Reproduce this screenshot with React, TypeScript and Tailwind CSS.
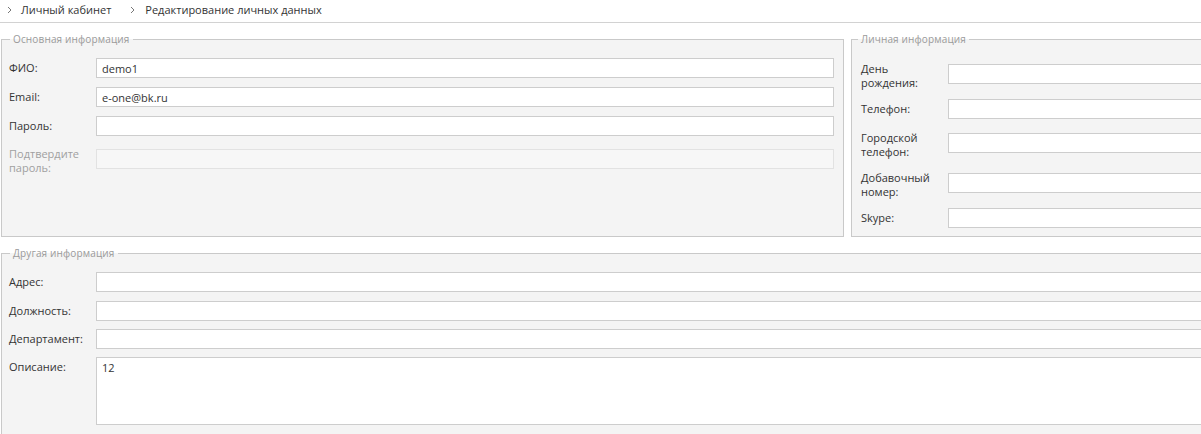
import type { ReactNode } from "react";

const FONT = { fontFamily: '"Open Sans", "Liberation Sans", sans-serif' };

function Chevron() {
  return (
    <svg width="5" height="8" viewBox="0 0 5 8" className="shrink-0">
      <polyline points="1,1 4,4 1,7" fill="none" stroke="#777" strokeWidth="1" />
    </svg>
  );
}

function Legend({ children, className = "" }: { children: ReactNode; className?: string }) {
  return (
    <legend
      className={`px-[3px] text-[10px] leading-[13px] tracking-[0.15px] text-[#9a9a9a] ${className}`}
    >
      {children}
    </legend>
  );
}

function Field({
  label,
  value = "",
  twoLine = false,
  disabled = false,
  className = "",
}: {
  label: ReactNode;
  value?: string;
  twoLine?: boolean;
  disabled?: boolean;
  className?: string;
}) {
  return (
    <div className={`flex ${twoLine ? "items-start" : "items-center"} ${className}`}>
      <label
        className={`w-[87px] shrink-0 text-[11px] leading-[14px] ${
          disabled ? "text-[#a0a0a0]" : "text-[#333]"
        }`}
      >
        {label}
      </label>
      <input
        readOnly
        disabled={disabled}
        value={value}
        className={`h-[20px] min-w-0 flex-1 border px-[5px] text-[11px] text-[#333] outline-none ${
          twoLine ? "mt-[2px]" : ""
        } ${disabled ? "border-[#e2e2e2] bg-[#f7f7f7]" : "border-[#cdcdcd] bg-white"}`}
      />
    </div>
  );
}

export default function App() {
  return (
    <div className="h-[434px] w-[1201px] overflow-hidden bg-white" style={FONT}>
      <div className="w-[1240px]">
        {/* breadcrumbs */}
        <div className="flex h-[23px] items-center border-b border-[#d2d2d2] pb-[2px] text-[11px] text-[#333]">
          <div className="ml-[7px] flex items-center gap-[9px]">
            <Chevron />
            <span>Личный кабинет</span>
          </div>
          <div className="ml-[19px] flex items-center gap-[10px]">
            <Chevron />
            <span>Редактирование личных данных</span>
          </div>
        </div>

        <div className="ml-px mt-[10px] flex gap-[7px]">
          <fieldset className="w-[843px] shrink-0 border border-[#c9c9c9] bg-[#f4f4f4] pb-[8px] pl-[7px] pr-[9px] pt-[12px]">
            <Legend className="ml-px">Основная информация</Legend>
            <Field label="ФИО:" value="demo1" />
            <Field label="Email:" value="e-one@bk.ru" className="mt-[9px]" />
            <Field label="Пароль:" className="mt-[9px]" />
            <Field
              label={
                <>
                  Подтвердите
                  <br />
                  пароль:
                </>
              }
              twoLine
              disabled
              className="mt-[11px]"
            />
          </fieldset>

          <fieldset className="min-w-0 flex-1 border border-[#c9c9c9] bg-[#f4f4f4] pb-[8px] pl-[6px] pt-[16px]">
            <Legend>Личная информация</Legend>
            <div className="pl-[3px]">
              <Field
                label={
                  <>
                    День
                    <br />
                    рождения:
                  </>
                }
                twoLine
              />
              <Field label="Телефон:" className="mt-[9px]" />
              <Field
                label={
                  <>
                    Городской
                    <br />
                    телефон:
                  </>
                }
                twoLine
                className="mt-[12px]"
              />
              <Field
                label={
                  <>
                    Добавочный
                    <br />
                    номер:
                  </>
                }
                twoLine
                className="mt-[12px]"
              />
              <Field label="Skype:" className="mt-[9px]" />
            </div>
          </fieldset>
        </div>

        <fieldset className="ml-px mt-[10px] border border-[#c9c9c9] bg-[#f4f4f4] pb-[10px] pl-[7px] pt-[12px]">
          <Legend className="ml-px">Другая информация</Legend>
          <Field label="Адрес:" />
          <Field label="Должность:" className="mt-[9px]" />
          <Field label="Департамент:" className="mt-[8px]" />
          <div className="mt-[8px] flex items-start">
            <label className="mt-[3px] w-[87px] shrink-0 text-[11px] leading-[14px] text-[#333]">
              Описание:
            </label>
            <textarea
              readOnly
              value="12"
              className="h-[68px] min-w-0 flex-1 resize-none border border-[#cdcdcd] bg-white px-[5px] py-[3px] text-[11px] leading-[14px] text-[#333] outline-none"
            />
          </div>
        </fieldset>
      </div>
    </div>
  );
}
